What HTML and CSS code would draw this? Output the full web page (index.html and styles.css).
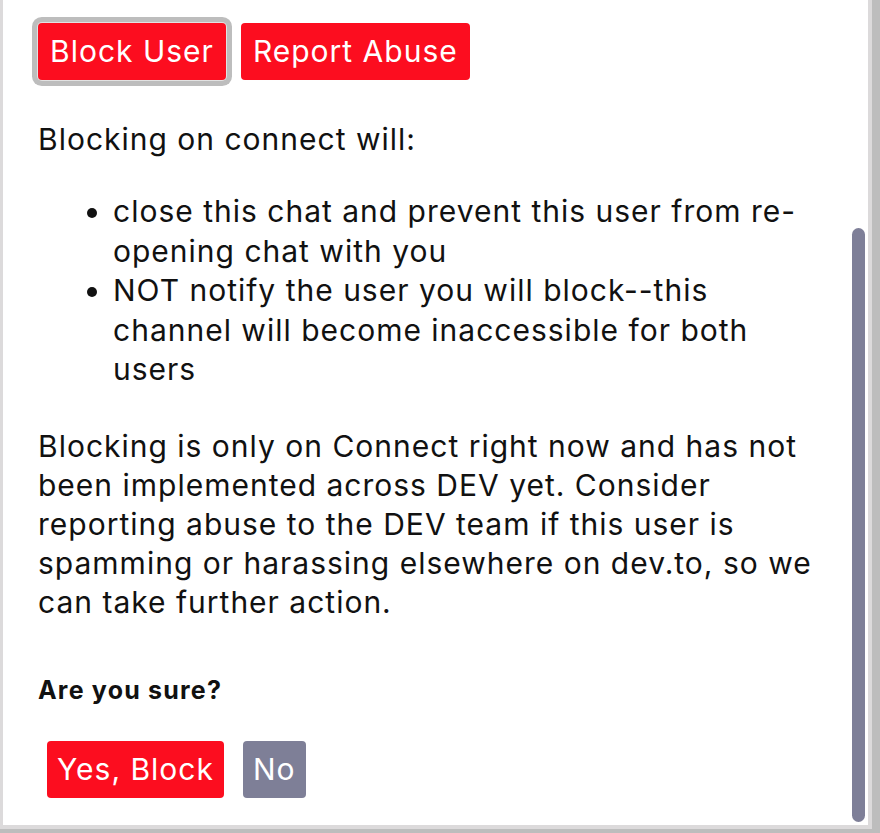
FILE: index.html
```html
<!DOCTYPE html>
<html lang="en">
<head>
<meta charset="utf-8">
<title>Block User</title>
<link rel="stylesheet" href="styles.css">
</head>
<body>
<div class="frame">
  <div class="panel">
    <div class="content">
      <div class="actions">
        <button class="btn btn-red btn-wide is-focused">Block User</button>
        <button class="btn btn-red btn-wide">Report Abuse</button>
      </div>
      <p class="lead">Blocking on connect will:</p>
      <ul class="points">
        <li>close this chat and prevent this user from re-opening chat with you</li>
        <li>NOT notify the user you will block--this channel will become inaccessible for both users</li>
      </ul>
      <p class="note">Blocking is only on Connect right now and has not been implemented across DEV yet. Consider reporting abuse to the DEV team if this user is spamming or harassing elsewhere on dev.to, so we can take further action.</p>
      <h4 class="confirm-title">Are you sure?</h4>
      <div class="confirm-actions">
        <button class="btn btn-red">Yes, Block</button>
        <button class="btn btn-gray">No</button>
      </div>
    </div>
    <div class="scroll-track"><div class="scroll-thumb"></div></div>
  </div>
</div>
</body>
</html>
```

FILE: styles.css
```css
html, body {
  margin: 0;
  padding: 0;
}
body {
  width: 880px;
  height: 833px;
  background: #bdbdbd;
  font-family: "Inter", "Liberation Sans", sans-serif;
  color: #111;
  letter-spacing: 1px;
  overflow: hidden;
}
.frame {
  width: 872px;
  height: 829px;
  box-sizing: border-box;
  border-left: 3px solid #dcdadb;
  border-right: 4px solid #dcdadb;
  border-bottom: 4px solid #dcdadb;
  background: #fff;
}
.panel {
  display: flex;
  height: 100%;
}
.content {
  flex: 1;
  padding: 23px 0 0 35px;
  min-width: 0;
}
.actions {
  display: flex;
  gap: 15px;
}
.btn {
  font-family: inherit;
  font-size: 30px;
  line-height: 36px;
  letter-spacing: 1px;
  color: #fff;
  border: none;
  border-radius: 4px;
  padding: 10px 10px 11px;
  cursor: pointer;
}
.btn-wide {
  padding-left: 12px;
  padding-right: 12px;
}
.btn-red { background: #fc0d1f; }
.btn-gray { background: #7e7f97; }
.is-focused {
  box-shadow: 0 0 0 1px #e2e2e2, 0 0 0 6px #bdbdbd;
}
.lead {
  margin: 40px 0 0;
  font-size: 30px;
  line-height: 39px;
}
.points {
  margin: 33px 0 0;
  padding-left: 75px;
  font-size: 30px;
  line-height: 39.5px;
  width: 700px;
}
.note {
  margin: 37px 0 0;
  font-size: 30px;
  line-height: 39px;
  width: 800px;
}
.confirm-title {
  margin: 54px 0 0;
  font-size: 25px;
  line-height: 28px;
  letter-spacing: 1.2px;
  font-weight: 700;
}
.confirm-actions {
  display: flex;
  gap: 19px;
  margin: 37px 0 0 9px;
}
.scroll-track {
  width: 16px;
  padding-top: 228px;
  box-sizing: border-box;
}
.scroll-thumb {
  width: 13px;
  height: 594px;
  border-radius: 7px;
  background: #7e7f98;
}
```
